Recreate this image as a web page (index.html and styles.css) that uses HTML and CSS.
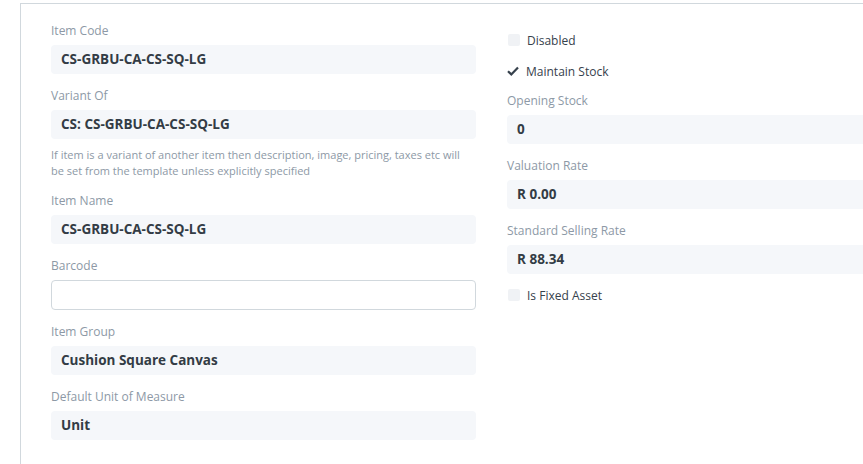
FILE: index.html
```html
<!DOCTYPE html>
<html lang="en">
<head>
    <meta charset="UTF-8">
    <meta name="viewport" content="width=device-width, initial-scale=1.0">
    <title>Item</title>
    <link rel="stylesheet" href="styles.css">
</head>
<body>
    <div class="form-page">
        <div class="form-section">
            <div class="form-column">
                <div class="form-group">
                    <label class="control-label">Item Code</label>
                    <div class="control-value">CS-GRBU-CA-CS-SQ-LG</div>
                </div>
                <div class="form-group">
                    <label class="control-label">Variant Of</label>
                    <div class="control-value">CS: CS-GRBU-CA-CS-SQ-LG</div>
                    <p class="help-box">If item is a variant of another item then description, image, pricing, taxes etc will be set from the template unless explicitly specified</p>
                </div>
                <div class="form-group">
                    <label class="control-label">Item Name</label>
                    <div class="control-value">CS-GRBU-CA-CS-SQ-LG</div>
                </div>
                <div class="form-group">
                    <label class="control-label" for="barcode">Barcode</label>
                    <input type="text" id="barcode" class="control-input">
                </div>
                <div class="form-group">
                    <label class="control-label">Item Group</label>
                    <div class="control-value">Cushion Square Canvas</div>
                </div>
                <div class="form-group">
                    <label class="control-label">Default Unit of Measure</label>
                    <div class="control-value">Unit</div>
                </div>
            </div>
            <div class="form-column">
                <div class="checkbox">
                    <span class="check-box"></span>
                    <span class="check-label">Disabled</span>
                </div>
                <div class="checkbox">
                    <svg class="check-mark" width="12" height="10" viewBox="0 0 12 10">
                        <path d="M1 5.2 L4.3 8.4 L11 1.4" fill="none" stroke="#36414c" stroke-width="2.2"/>
                    </svg>
                    <span class="check-label">Maintain Stock</span>
                </div>
                <div class="form-group">
                    <label class="control-label">Opening Stock</label>
                    <div class="control-value">0</div>
                </div>
                <div class="form-group">
                    <label class="control-label">Valuation Rate</label>
                    <div class="control-value">R 0.00</div>
                </div>
                <div class="form-group">
                    <label class="control-label">Standard Selling Rate</label>
                    <div class="control-value">R 88.34</div>
                </div>
                <div class="checkbox last">
                    <span class="check-box"></span>
                    <span class="check-label">Is Fixed Asset</span>
                </div>
            </div>
        </div>
    </div>
</body>
</html>
```

FILE: styles.css
```css
body {
    margin: 0;
    font-family: "Open Sans", "Noto Sans", sans-serif;
    color: #36414c;
    background-color: #fff;
    overflow: hidden;
}
.form-page {
    margin: 3px 0 0 20px;
    height: 461px;
    overflow: hidden;
    border-top: 1px solid #d1d8dd;
    border-left: 1px solid #d1d8dd;
}
.form-section {
    display: grid;
    grid-template-columns: 425px 425px;
    column-gap: 31px;
    padding: 18px 0 0 30px;
}
.form-group {
    margin-bottom: 13px;
}
.control-label {
    display: block;
    font-size: 12px;
    line-height: 18px;
    color: #8d99a6;
    margin-bottom: 5px;
}
.control-value {
    height: 29px;
    line-height: 29px;
    padding: 0 10px;
    border-radius: 4px;
    background-color: #f5f7fa;
    font-size: 13.5px;
    font-weight: bold;
    color: #333c45;
}
.control-input {
    display: block;
    box-sizing: border-box;
    width: 100%;
    height: 30px;
    margin: 0;
    border: 1px solid #d1d8dd;
    border-radius: 4px;
    background-color: #fff;
}
.help-box {
    max-width: 415px;
    margin: 8px 0 0;
    font-size: 11px;
    line-height: 16px;
    color: #8d99a6;
}
.checkbox {
    display: flex;
    align-items: center;
    height: 18px;
    margin: 9px 0 12px;
    font-size: 12px;
}
.checkbox + .checkbox {
    margin-top: 13px;
}
/* collapses with the group's 13px bottom margin */
.checkbox.last {
    margin-top: -1px;
}
.check-box {
    width: 12px;
    height: 12px;
    margin: 0 7px 0 1px;
    border-radius: 2px;
    background-color: #f0f2f5;
}
.check-mark {
    margin: 0 7px 0 0;
}
.check-label {
    color: #36414c;
}
```
